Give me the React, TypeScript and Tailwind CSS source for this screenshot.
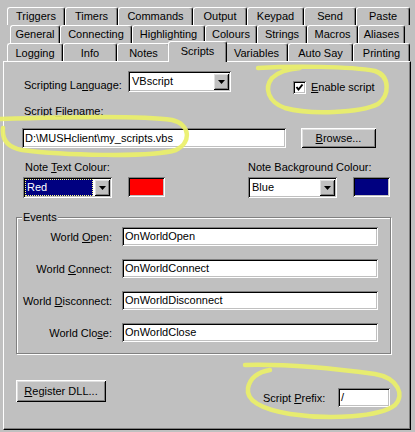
const sunken =
  "shadow-[inset_1px_1px_#808080,inset_-1px_-1px_#ffffff,inset_2px_2px_#000000,inset_-2px_-2px_#c0c0c0]";
const raised =
  "shadow-[inset_1px_1px_#ffffff,inset_-1px_-1px_#000000,inset_2px_2px_#dfdfdf,inset_-2px_-2px_#808080]";

const rows: [string, string][][] = [
  [
    ["Triggers", "w-[58px]"],
    ["Timers", "w-[53px]"],
    ["Commands", "w-[75px]"],
    ["Output", "w-[54px]"],
    ["Keypad", "w-[57px]"],
    ["Send", "w-[52px]"],
    ["Paste", "w-[54px]"],
  ],
  [
    ["General", "w-[50px]"],
    ["Connecting", "w-[72px]"],
    ["Highlighting", "w-[73px]"],
    ["Colours", "w-[52px]"],
    ["Strings", "w-[50px]"],
    ["Macros", "w-[51px]"],
    ["Aliases", "w-[47px]"],
  ],
  [
    ["Logging", "w-[56px]"],
    ["Info", "w-[54px]"],
    ["Notes", "w-[53px]"],
    ["Scripts", "w-[59px]"],
    ["Variables", "w-[63px]"],
    ["Auto Say", "w-[65px]"],
    ["Printing", "w-[57px]"],
  ],
];

const Arrow = () => (
  <div className={`w-[16px] h-[17px] m-[2px] ml-0 flex items-center justify-center bg-[#c0c0c0] ${raised}`}>
    <svg width="7" height="4" viewBox="0 0 7 4">
      <polygon points="0,0 7,0 3.5,4" fill="#000" />
    </svg>
  </div>
);

const Field = ({ value, className }: { value: string; className: string }) => (
  <div className={`bg-white pl-[3px] flex items-center whitespace-nowrap ${sunken} ${className}`}>
    {value}
  </div>
);

export default function App() {
  return (
    <div className="relative w-[415px] h-[432px] bg-[#c0c0c0] pt-[7px] text-[11px] leading-[13px] text-black font-['Liberation_Sans',Arial,sans-serif] overflow-hidden">
      {/* tab rows */}
      <div className="flex ml-[7px]">
        {rows[0].map(([t, w]) => (
          <div
            key={t}
            className={`${w} h-[18px] flex items-center justify-center border-t border-l border-r border-white border-r-black rounded-t-[3px] shadow-[inset_-1px_0_#808080]`}
          >
            {t}
          </div>
        ))}
      </div>
      <div className="flex ml-[10px]">
        {rows[1].map(([t, w]) => (
          <div
            key={t}
            className={`${w} h-[18px] flex items-center justify-center border-t border-l border-r border-white border-r-black rounded-t-[3px] shadow-[inset_-1px_0_#808080]`}
          >
            {t}
          </div>
        ))}
      </div>
      <div className="flex items-end h-[18px] ml-[7px]">
        {rows[2].map(([t, w]) =>
          t === "Scripts" ? (
            <div
              key={t}
              className={`${w} h-[21px] -mx-[2px] -mb-[1px] pb-[2px] relative z-10 bg-[#c0c0c0] flex items-center justify-center border-t border-l border-r border-white border-r-black rounded-t-[3px] shadow-[inset_-1px_0_#808080]`}
            >
              {t}
            </div>
          ) : (
            <div
              key={t}
              className={`${w} h-[18px] pt-[2px] flex items-center justify-center border-t border-l border-r border-white border-r-black rounded-t-[3px] shadow-[inset_-1px_0_#808080]`}
            >
              {t}
            </div>
          )
        )}
      </div>

      {/* page */}
      <div className="ml-[3px] w-[408px] h-[369px] border-t border-l border-r border-b border-white border-r-black border-b-black shadow-[inset_-1px_-1px_#808080] flex flex-col">
        <div className="mt-[9px] h-[21px] flex items-start">
          <div className="ml-[20px] w-[104px] mt-[8px]">
            Scripting La<u>n</u>guage:
          </div>
          <div className={`w-[103px] h-[21px] flex bg-white ${sunken}`}>
            <div className="flex-1 pl-[4px] flex items-center">VBscript</div>
            <Arrow />
          </div>
          <div className="ml-[62px] mt-[10px] flex items-center gap-[5px]">
            <div className={`w-[13px] h-[13px] bg-white flex items-center justify-center ${sunken}`}>
              <svg width="9" height="9" viewBox="0 0 9 9">
                <polyline points="1.5,4 3.5,6.5 7.5,1.5" fill="none" stroke="#000" strokeWidth="2" />
              </svg>
            </div>
            <span className="-mt-[1px]">
              <u>E</u>nable script
            </span>
          </div>
        </div>

        <div className="mt-[13px] ml-[20px]">
          Script <u>F</u>ilename:
        </div>

        <div className="mt-[10px] flex">
          <Field value="D:\MUSHclient\my_scripts.vbs" className="ml-[18px] w-[264px] h-[20px]" />
          <div className={`ml-[15px] w-[75px] h-[20px] flex items-center justify-center ${raised}`}>
            <span>
              <u>B</u>rowse...
            </span>
          </div>
        </div>

        <div className="mt-[13px] flex">
          <div className="ml-[21px] w-[223px]">
            Note <u>T</u>ext Colour:
          </div>
          <div>Note Background Colour:</div>
        </div>

        <div className="mt-[3px] flex">
          <div className={`ml-[19px] w-[89px] h-[21px] flex bg-white ${sunken}`}>
            <div className="flex-1 m-[2px] mr-[1px] bg-[#000080] text-white pl-[2px] flex items-center outline outline-1 outline-dotted outline-[#ffff80] -outline-offset-1">
              Red
            </div>
            <Arrow />
          </div>
          <div className={`ml-[16px] w-[37px] h-[20px] bg-[#ff0000] ${sunken}`} />
          <div className={`ml-[83px] w-[89px] h-[21px] flex bg-white ${sunken}`}>
            <div className="flex-1 pl-[4px] flex items-center">Blue</div>
            <Arrow />
          </div>
          <div className={`ml-[16px] w-[37px] h-[20px] bg-[#000080] ${sunken}`} />
        </div>

        {/* events group */}
        <div className="relative mt-[19px] ml-[12px] w-[375px] h-[137px] border border-[#808080] shadow-[inset_1px_1px_#ffffff,1px_1px_#ffffff] flex flex-col gap-[13px] pt-[9px]">
          <span className="absolute -top-[7px] left-[5px] px-[1px] bg-[#c0c0c0]">Events</span>
          {[
            [<>World <u>O</u>pen:</>, "OnWorldOpen"],
            [<>World <u>C</u>onnect:</>, "OnWorldConnect"],
            [<>World <u>D</u>isconnect:</>, "OnWorldDisconnect"],
            [<>World Clo<u>s</u>e:</>, "OnWorldClose"],
          ].map(([label, value], i) => (
            <div key={i} className="flex items-start h-[19px]">
              <div className="w-[95px] text-right mt-[4px]">{label}</div>
              <Field value={value as string} className="ml-[10px] w-[256px] h-[19px]" />
            </div>
          ))}
        </div>

        <div className="mt-[26px] flex items-start">
          <div className={`ml-[12px] w-[90px] h-[22px] flex items-center justify-center ${raised}`}>
            <span>
              <u>R</u>egister DLL...
            </span>
          </div>
          <div className="ml-[157px] w-[75px] mt-[12px]">
            Script <u>P</u>refix:
          </div>
          <Field value="/" className="mt-[8px] w-[52px] h-[19px]" />
        </div>
      </div>

      {/* yellow marker annotations */}
      <svg
        className="absolute inset-0 z-20 pointer-events-none"
        width="415"
        height="432"
        viewBox="0 0 415 432"
      >
        <g fill="none" stroke="#ebf06a" strokeWidth="4.5" strokeLinecap="round" opacity="0.92">
          <path d="M0 119 C60 117 140 115 172 120 C190 124 192 142 176 150 C150 158 60 155 22 150 C6 147 2 138 3 128" />
          <path d="M258 68 C290 66 350 66 375 71 C390 76 390 95 378 104 C360 113 310 115 285 108 C268 102 264 88 272 78 C278 72 288 69 300 68" />
          <path d="M245 365 C280 364 330 368 375 374 C398 378 405 395 395 405 C380 417 330 420 290 414 C260 409 246 400 248 388 C250 378 258 372 270 370" />
        </g>
      </svg>
    </div>
  );
}
